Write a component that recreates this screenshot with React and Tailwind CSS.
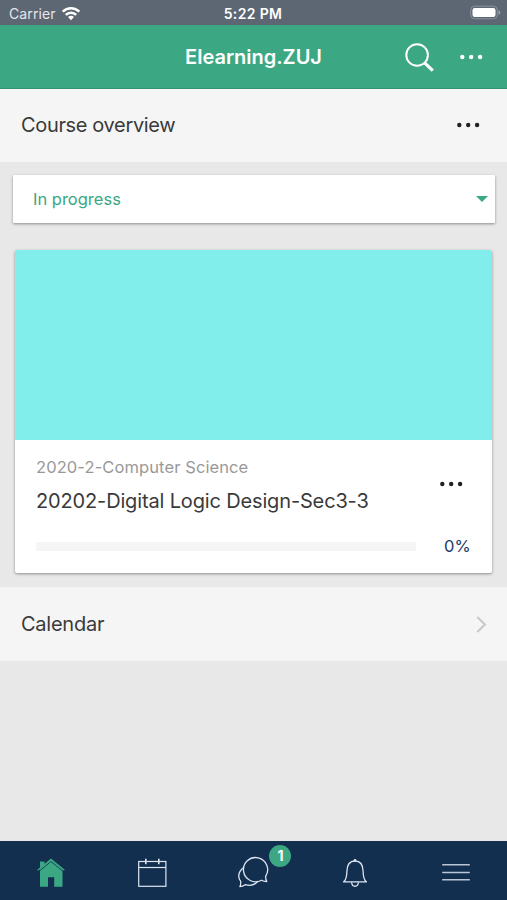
import React from 'react';

function WifiIcon() {
    return (
        <svg className="w-5 h-4 -mt-0.5" viewBox="0 0 20 16" fill="none" stroke="#fff" strokeWidth="2.6">
            <path d="M1.7 6.6a11.8 11.8 0 0 1 16.6 0" />
            <path d="M4.8 9.9a7.4 7.4 0 0 1 10.4 0" />
            <path d="M7 12.1a4.3 4.3 0 0 1 6 0L10 15.2Z" fill="#fff" stroke="none" />
        </svg>
    );
}

function BatteryIcon() {
    return (
        <svg className="w-[31px] h-[15px] -mt-0.5" viewBox="0 0 31 15">
            <rect x="0.7" y="1.2" width="26.6" height="12.6" rx="4" fill="none" stroke="#8d949f" strokeWidth="1" />
            <rect x="2.5" y="3" width="23" height="9" rx="2.2" fill="#fff" />
            <path d="M28.7 5.2c2 .7 2 3.9 0 4.6Z" fill="#a3a9b2" />
        </svg>
    );
}

function SearchIcon() {
    return (
        <svg className="w-[30px] h-[30px]" viewBox="0 0 30 30" fill="none" stroke="#fff">
            <circle cx="12.1" cy="13" r="10.8" strokeWidth="2" />
            <path d="M19.6 20.8 27.8 28.7" strokeWidth="3.2" />
        </svg>
    );
}

function DotsIcon({ className }) {
    return (
        <svg className={className} viewBox="0 0 24 6" fill="currentColor">
            <circle cx="3.3" cy="3" r="2.2" />
            <circle cx="12.2" cy="3" r="2.2" />
            <circle cx="21.1" cy="3" r="2.2" />
        </svg>
    );
}

function HomeIcon() {
    return (
        <svg className="w-[30px] h-[30px]" viewBox="0 0 30 30">
            <path d="M4 15.2V4.6h4.5v3.2L15 2.7l11.5 9.4v17.7h-8.3v-9.5H12v9.5H4Z" fill="#3ba783" />
            <path d="M1.7 13.2 15 2.5l13.3 10.7" fill="none" stroke="#3ba783" strokeWidth="1.4" />
            <path d="M2.8 14.5 15 4.5l12.2 10" fill="none" stroke="#132f50" strokeWidth="0.8" />
        </svg>
    );
}

function CalendarIcon() {
    return (
        <svg className="w-[30px] h-[30px]" viewBox="0 0 30 30" fill="none" stroke="#dce6f1">
            <rect x="1.7" y="4.5" width="27.2" height="24.8" strokeWidth="1.2" />
            <path d="M1.7 10.5h27.2" strokeWidth="1.2" />
            <path d="M8.8 1.8v5.4M21.8 1.8v5.4" strokeWidth="1.6" />
        </svg>
    );
}

function ChatIcon() {
    return (
        <svg className="w-[32px] h-[32px]" viewBox="0 0 32 32" fill="none" stroke="#dce6f1" strokeWidth="1.3" strokeLinejoin="round">
            <path d="M28.6 20.4A12.1 12.1 0 1 0 24.5 24.2c1.6.9 3.3 1.4 5.3 1.3-.9-1.4-1.2-3.2-1.2-5.1Z" />
            <path d="M7 11.2C.9 15.5.6 21.3 3.7 25.4c.1 2 0 3.7-.8 5.2 2 0 3.8-.8 5.3-1.9 5 1.5 9.9 0 12.8-3.6" />
        </svg>
    );
}

function BellIcon() {
    return (
        <svg className="w-[30px] h-[30px]" viewBox="0 0 30 30" fill="none" stroke="#dce6f1" strokeWidth="1.3" strokeLinejoin="round">
            <path d="M3.6 24.9c2.5-1.8 3.2-5.2 3.3-10.6C7 7.8 9.6 4 15 4s8 3.8 8.1 10.3c.1 5.4.8 8.8 3.3 10.6Z" />
            <path d="M11.6 25.2c.3 5.4 6.5 5.4 6.8 0" />
            <circle cx="15" cy="3.2" r="1.3" fill="#dce6f1" stroke="none" />
        </svg>
    );
}

function MenuIcon() {
    return (
        <svg className="w-[30px] h-[30px]" viewBox="0 0 30 30" fill="none" stroke="#b9c6d8" strokeWidth="1.5">
            <path d="M1.2 7.8h27.6M1.2 15.4h27.6M1.2 22.8h27.6" />
        </svg>
    );
}

const tabs = [
    { name: 'home', Icon: HomeIcon },
    { name: 'calendar', Icon: CalendarIcon },
    { name: 'messages', Icon: ChatIcon, badge: 1 },
    { name: 'notifications', Icon: BellIcon },
    { name: 'more', Icon: MenuIcon },
];

export default function App() {
    return (
        <div className="w-[507px] h-[900px] flex flex-col bg-[#e8e8e8] font-['Inter','Liberation_Sans',sans-serif] text-[#3a3a3a] overflow-hidden whitespace-nowrap">
            <div className="h-[25px] shrink-0 grid grid-cols-3 items-center bg-[#5d6673] text-white pl-[9px] pr-[6px] pt-[2px]">
                <div className="flex items-center gap-[5px]">
                    <span className="text-[14px] leading-none text-[#e4e7eb] tracking-[0.1px]">Carrier</span>
                    <WifiIcon />
                </div>
                <div className="text-center text-[14px] leading-none font-semibold tracking-[0.35px] -ml-1">5:22 PM</div>
                <div className="flex justify-end">
                    <BatteryIcon />
                </div>
            </div>

            <header className="h-16 shrink-0 grid grid-cols-[1fr_auto_1fr] items-center bg-[#3ba783] border-b border-[#339370] text-white">
                <div />
                <h1 className="text-[20px] leading-none font-semibold">Elearning.ZUJ</h1>
                <div className="flex items-center justify-end gap-6 pr-6">
                    <SearchIcon />
                    <DotsIcon className="w-6 h-1.5" />
                </div>
            </header>

            <section className="h-[73px] shrink-0 flex items-center justify-between bg-[#f5f5f5] pl-[21px] pr-[27px] pb-px">
                <h2 className="text-[20px] leading-none tracking-[-0.35px]">Course overview</h2>
                <DotsIcon className="w-6 h-1.5 text-[#222]" />
            </section>

            <div className="mt-[13px] ml-[13px] mr-3 h-12 shrink-0 flex items-center justify-between bg-white rounded-[1px] pl-5 pr-[7px] shadow-[0_1px_3px_rgba(0,0,0,0.4)]">
                <span className="text-[16.5px] leading-none text-[#3ba783]">In progress</span>
                <svg className="w-3 h-1.5" viewBox="0 0 12 6">
                    <path d="M0 0h12L6 6Z" fill="#3ba783" />
                </svg>
            </div>

            <article className="mt-[27px] mx-[15px] h-[323px] shrink-0 flex flex-col bg-white rounded-[2px] overflow-hidden shadow-[0_1px_3px_rgba(0,0,0,0.4)]">
                <div className="h-[190px] bg-[#82eeeb]" />
                <div className="flex items-center justify-between pl-[21px] pr-[29px] h-[88px]">
                    <div className="pt-0.5">
                        <p className="text-[16.5px] leading-5 tracking-[0.1px] text-[#999]">2020-2-Computer Science</p>
                        <p className="mt-3 text-[20px] leading-6 tracking-[-0.15px]">20202-Digital Logic Design-Sec3-3</p>
                    </div>
                    <DotsIcon className="w-6 h-1.5 text-[#222]" />
                </div>
                <div className="h-9 flex items-center pl-[21px]">
                    <div className="w-[380px] h-[9px] bg-[#f5f5f5]">
                        <div className="h-full bg-[#3ba783]" style={{ width: '0%' }} />
                    </div>
                    <span className="ml-7 text-[16.5px] leading-none text-[#1d3a63]">0%</span>
                </div>
            </article>

            <section className="mt-[14px] h-[74px] shrink-0 flex items-center justify-between bg-[#f5f5f5] pl-[21px] pr-5">
                <h2 className="text-[20px] leading-none tracking-[-0.25px]">Calendar</h2>
                <svg className="w-[11px] h-[17px]" viewBox="0 0 11 17" fill="none" stroke="#c8c8c8" strokeWidth="2">
                    <path d="m1.3 1 7.7 7.5L1.3 16" />
                </svg>
            </section>

            <nav className="mt-auto h-[59px] shrink-0 grid grid-cols-5 bg-[#132f50]">
                {tabs.map(({ name, Icon, badge }) => (
                    <div key={name} className="flex items-center justify-center pt-0.5">
                        <div className="relative">
                            <Icon />
                            {badge && (
                                <span className="absolute -top-[11px] left-8 w-[22px] h-[22px] rounded-full bg-[#3ba783] text-white text-[14px] leading-none font-bold flex items-center justify-center">
                                    {badge}
                                </span>
                            )}
                        </div>
                    </div>
                ))}
            </nav>
        </div>
    );
}
